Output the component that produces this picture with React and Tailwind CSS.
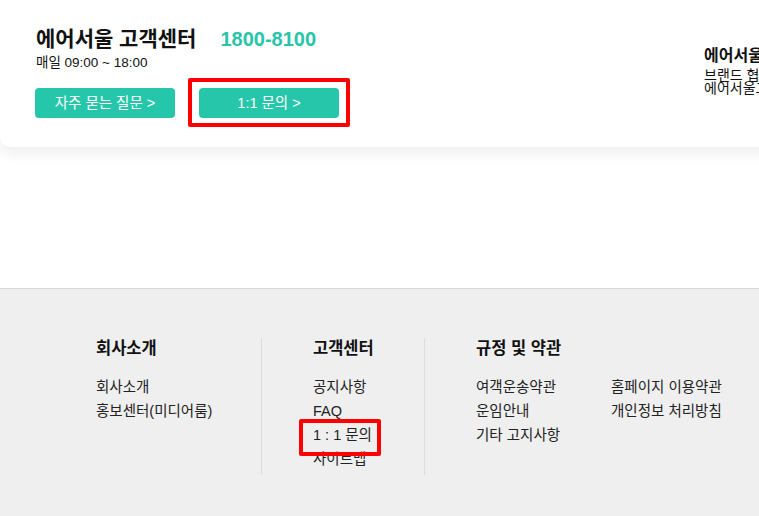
export default function App() {
  const font = { fontFamily: '"Liberation Sans", "Noto Sans CJK KR", sans-serif' };
  return (
    <div className="relative w-[759px] h-[516px] overflow-hidden bg-white text-[#111]" style={font}>
      {/* top card area */}
      <div className="h-[288px] bg-white">
        <div className="flex w-[900px] h-[147px] bg-white rounded-bl-[10px] shadow-[0_6px_14px_rgba(0,0,0,0.07)]">
          <div className="pl-[36px] pt-[25px] w-[704px] shrink-0">
            <div className="flex items-center h-[28px]">
              <span className="text-[21px] font-bold leading-[28px]">에어서울 고객센터</span>
              <span className="ml-[24px] text-[20px] font-bold leading-[28px] text-[#26c4a8]">1800-8100</span>
            </div>
            <div className="mt-[2px] text-[13.5px] leading-[16px]">매일 09:00 ~ 18:00</div>
            <div className="flex mt-[17px] gap-[24px] -ml-[1px]">
              <button className="w-[140px] h-[30px] rounded-[4px] bg-[#26c6aa] text-white text-[14.5px] leading-[30px]">자주 묻는 질문 &gt;</button>
              <button className="w-[140px] h-[30px] rounded-[4px] bg-[#26c6aa] text-white text-[14.5px] leading-[30px]">1:1 문의 &gt;</button>
            </div>
          </div>
          <div className="pt-[46px] whitespace-nowrap">
            <div className="text-[16px] font-bold leading-[20px]">에어서울 브랜드</div>
            <div className="mt-[3px] text-[14px] leading-[13px]">브랜드 협업 문의</div>
            <div className="text-[14px] leading-[13px]">에어서울고객센터</div>
          </div>
        </div>
      </div>
      {/* footer */}
      <div className="h-[228px] border-t border-[#d6d6d6] bg-[#efefef] pt-[49px]">
        <div className="flex pl-[96px]">
          <div className="w-[165px] pb-[4px]">
            <div className="text-[16.5px] font-bold leading-[20px]">회사소개</div>
            <ul className="mt-[17px] text-[14.5px] leading-[24px] text-[#222]">
              <li>회사소개</li>
              <li>홍보센터(미디어룸)</li>
            </ul>
          </div>
          <div className="w-[163px] border-l border-[#dcdcdc] pl-[51px] pb-[4px]">
            <div className="text-[16.5px] font-bold leading-[20px]">고객센터</div>
            <ul className="mt-[17px] text-[14.5px] leading-[24px] text-[#222]">
              <li>공지사항</li>
              <li>FAQ</li>
              <li>1 : 1 문의</li>
              <li>사이트맵</li>
            </ul>
          </div>
          <div className="border-l border-[#dcdcdc] pl-[51px] pb-[4px]">
            <div className="text-[16.5px] font-bold leading-[20px]">규정 및 약관</div>
            <div className="mt-[17px] flex text-[14.5px] leading-[24px] text-[#222]">
              <ul className="w-[135px]">
                <li>여객운송약관</li>
                <li>운임안내</li>
                <li>기타 고지사항</li>
              </ul>
              <ul>
                <li>홈페이지 이용약관</li>
                <li>개인정보 처리방침</li>
              </ul>
            </div>
          </div>
        </div>
      </div>
      {/* annotation boxes */}
      <div className="absolute left-[188px] top-[78px] w-[162px] h-[49px] border-[4px] border-[#ff0000] rounded-[2px]"></div>
      <div className="absolute left-[299px] top-[419px] w-[82px] h-[37px] border-[4px] border-[#ff0000] rounded-[2px]"></div>
    </div>
  );
}
